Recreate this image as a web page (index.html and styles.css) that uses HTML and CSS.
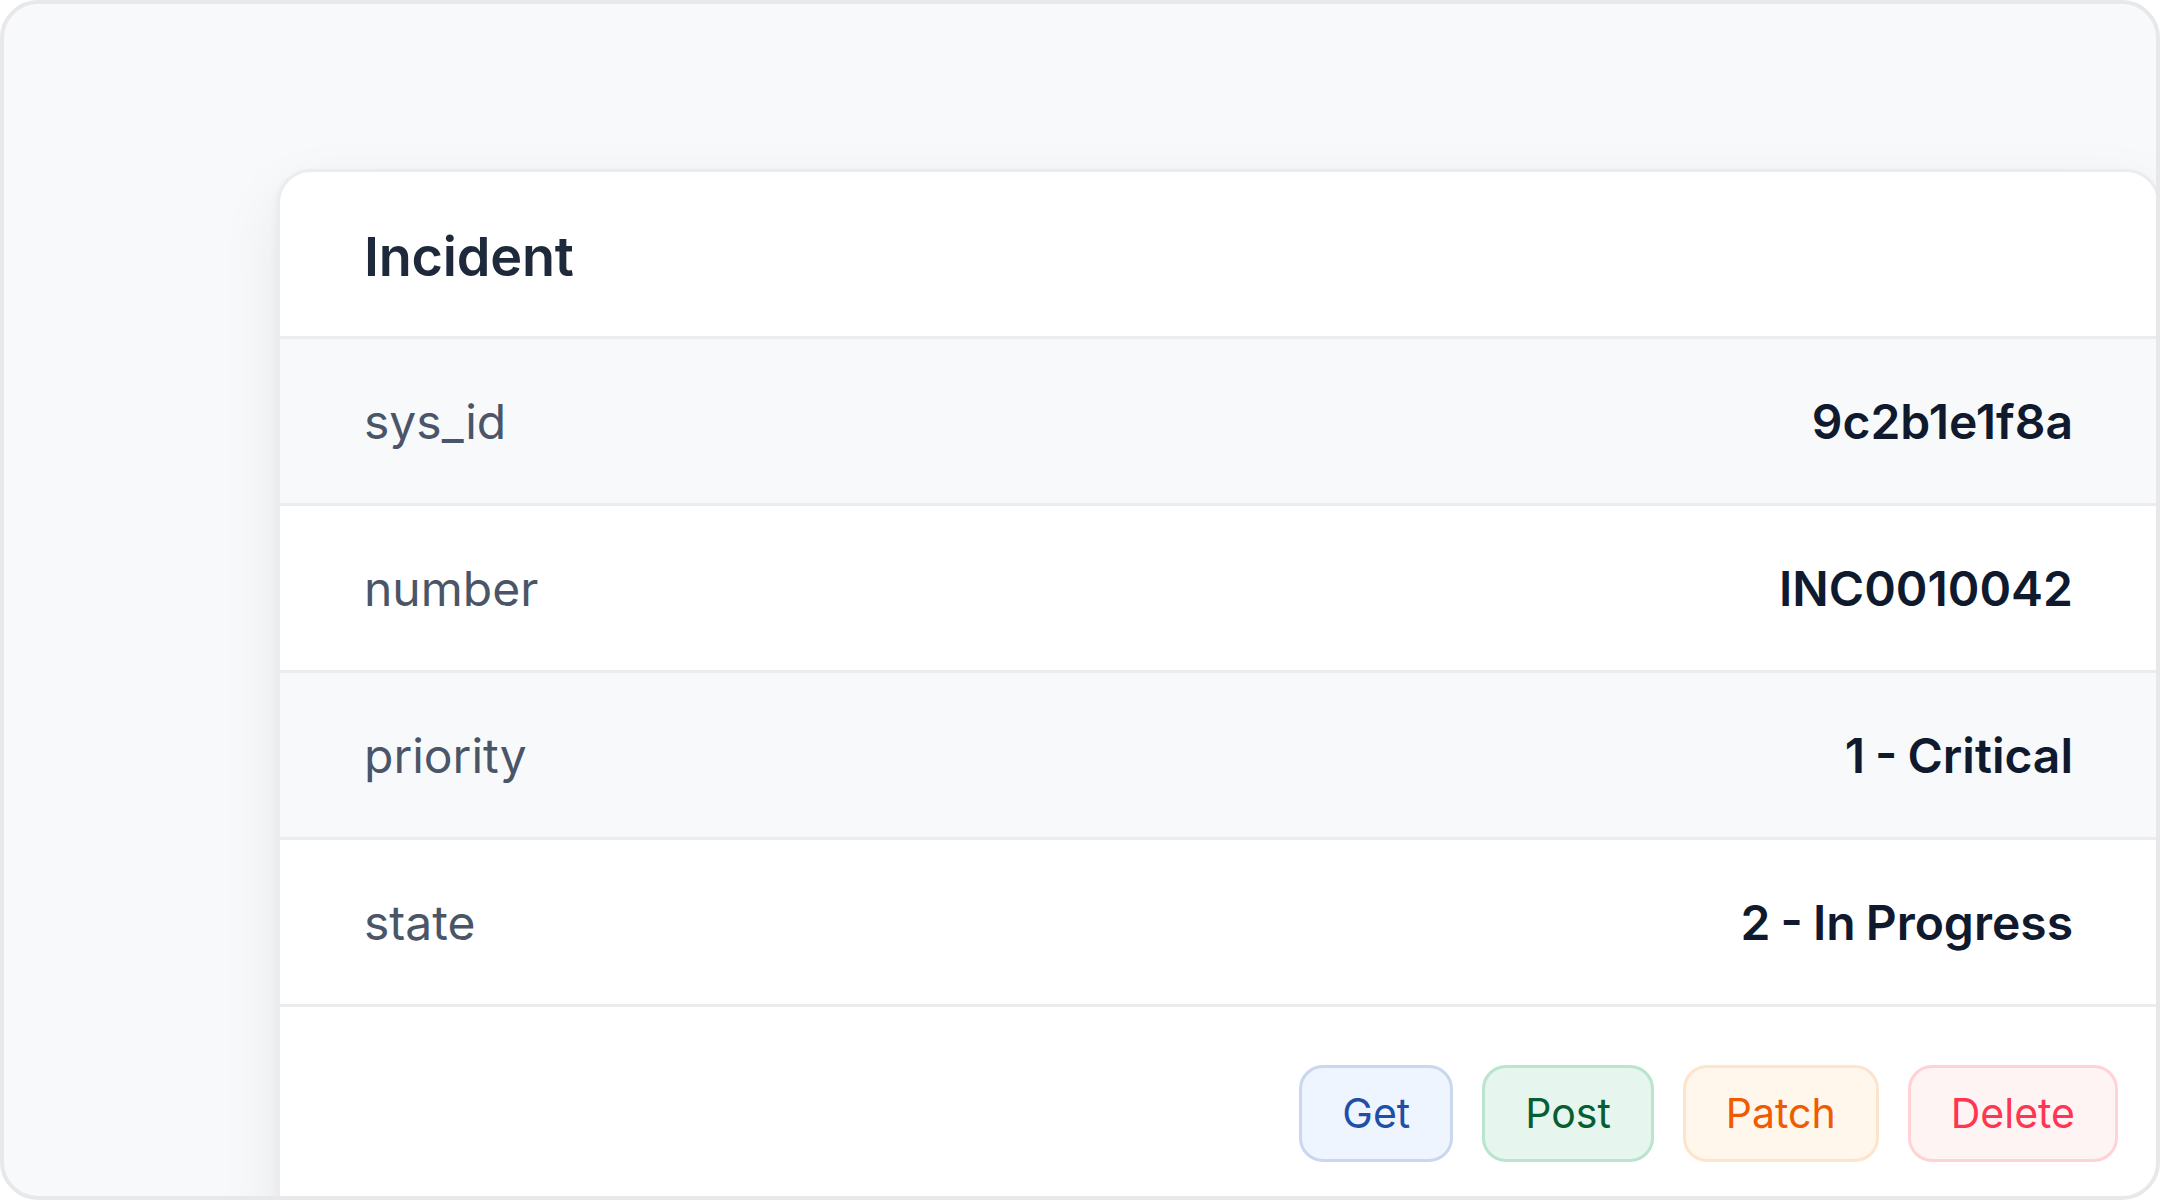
FILE: index.html
```html
<!DOCTYPE html>
<html lang="en">
<head>
<meta charset="utf-8">
<title>Incident</title>
<link rel="stylesheet" href="styles.css">
</head>
<body>
<div class="frame">
  <section class="card">
    <header class="card-header">
      <h1 class="title">Incident</h1>
    </header>
    <div class="row row-alt">
      <span class="label">sys_id</span>
      <span class="value">9c2b1e1f8a</span>
    </div>
    <div class="row">
      <span class="label">number</span>
      <span class="value">INC0010042</span>
    </div>
    <div class="row row-alt">
      <span class="label">priority</span>
      <span class="value">1 - Critical</span>
    </div>
    <div class="row">
      <span class="label">state</span>
      <span class="value">2 - In Progress</span>
    </div>
    <footer class="card-footer">
      <button class="btn btn-get">Get</button>
      <button class="btn btn-post">Post</button>
      <button class="btn btn-patch">Patch</button>
      <button class="btn btn-delete">Delete</button>
    </footer>
  </section>
</div>
</body>
</html>
```

FILE: styles.css
```css
* {
  box-sizing: border-box;
}

html, body {
  margin: 0;
  padding: 0;
  width: 2160px;
  height: 1200px;
  overflow: hidden;
  background: #ffffff;
}

body {
  font-family: Inter, "Noto Sans", "Liberation Sans", sans-serif;
}

.frame {
  width: 2160px;
  height: 1200px;
  border: 4px solid #e8e8ea;
  border-radius: 38px;
  background: #f8f9fa;
  overflow: hidden;
  padding: 165px 0 0 273px;
}

.card {
  width: 1883px;
  background: #ffffff;
  border: 3px solid #ebecee;
  border-radius: 34px;
  box-shadow: 0 24px 64px rgba(15, 23, 42, 0.07), 0 4px 10px rgba(15, 23, 42, 0.05);
  overflow: hidden;
}

.card-header {
  height: 167px;
  display: flex;
  align-items: center;
  padding: 5px 84px 0;
  border-bottom: 3px solid #ebecee;
}

.title {
  margin: 0;
  font-size: 54px;
  font-weight: 600;
  color: #1e293b;
  letter-spacing: -0.2px;
}

.row {
  height: 167px;
  display: flex;
  align-items: center;
  justify-content: space-between;
  padding: 0 84px;
  border-bottom: 3px solid #ebecee;
  background: #ffffff;
}

.row-alt {
  background: #f8f9fb;
}

.label {
  font-size: 48px;
  font-weight: 400;
  color: #4a5568;
}

.value {
  font-size: 48px;
  font-weight: 600;
  color: #0f1a2e;
  letter-spacing: 0;
  word-spacing: -2px;
}

.card-footer {
  display: flex;
  justify-content: flex-end;
  gap: 29px;
  padding: 58px 39px 80px 84px;
}

.btn {
  height: 97px;
  padding: 0 40px;
  border-radius: 24px;
  border: 3px solid;
  font-family: Inter, "Noto Sans", "Liberation Sans", sans-serif;
  font-size: 41px;
  font-weight: 400;
  line-height: 1;
  cursor: pointer;
}

.btn-get {
  background: #eff5fe;
  border-color: #c9d8ef;
  color: #1f4fa6;
}

.btn-post {
  background: #e6f5ee;
  border-color: #b9e4cf;
  color: #075e30;
}

.btn-patch {
  background: #fff6ec;
  border-color: #fde4cc;
  color: #f05a00;
}

.btn-delete {
  background: #fff4f4;
  border-color: #ffd3d6;
  color: #ff3551;
}
```
